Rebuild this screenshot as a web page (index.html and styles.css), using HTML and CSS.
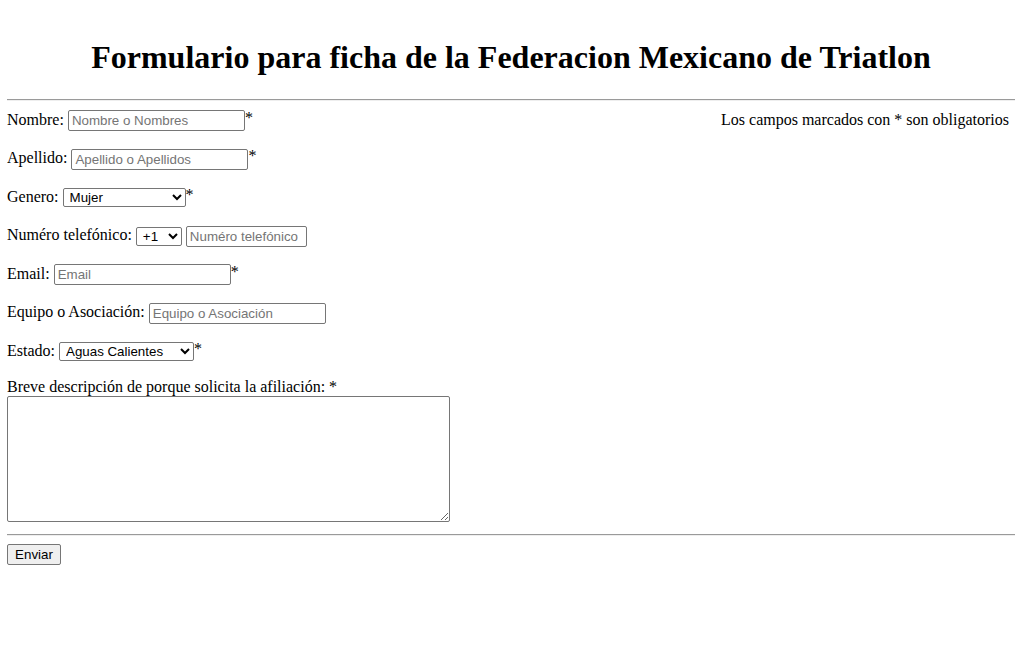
FILE: index.html
```html
<!DOCTYPE html>
<html lang="es">
<head>
<meta charset="utf-8">
<title>Ficha</title>
<link rel="stylesheet" href="styles.css">
</head>
<body>
<header class="head">
<h1 class="title">Formulario para ficha de la Federacion Mexicano de Triatlon</h1>
</header>
<hr class="rule">
<form class="form">
<p class="row row-first"><span class="note">Los campos marcados con * son obligatorios</span>Nombre: <input class="field" type="text" placeholder="Nombre o Nombres"><span class="req">*</span></p>
<p class="row">Apellido: <input class="field" type="text" placeholder="Apellido o Apellidos"><span class="req">*</span></p>
<p class="row">Genero: <select class="sel sel-gen"><option>Mujer</option><option>Hombre</option></select><span class="req">*</span></p>
<p class="row">Numéro telefónico: <select class="sel sel-code"><option>+1</option></select> <input class="field field-tel" type="text" placeholder="Numéro telefónico"></p>
<p class="row">Email: <input class="field" type="text" placeholder="Email"><span class="req">*</span></p>
<p class="row">Equipo o Asociación: <input class="field" type="text" placeholder="Equipo o Asociación"></p>
<p class="row">Estado: <select class="sel sel-est"><option>Aguas Calientes</option></select><span class="req">*</span></p>
<p class="row-desc">Breve descripción de porque solicita la afiliación: *<br><textarea class="desc"></textarea></p>
<hr class="rule rule-bottom">
<button class="btn" type="button">Enviar</button>
</form>
</body>
</html>
```
FILE: styles.css
```css
body {
  margin: 0 3px 0 7px;
  padding-top: 8px;
  font-family: "Liberation Serif", "Times New Roman", serif;
  font-size: 16px;
  color: #000;
  background: #fff;
}
.head {
  padding-top: 10px;
}
.title {
  text-align: center;
  font-size: 32px;
  font-weight: bold;
  margin: 21px 0 23px;
}
.rule {
  border: none;
  border-top: 1px solid #9a9a9a;
  border-bottom: 1px solid #eee;
  margin: 0;
}
.form {
  margin: 0;
}
.note {
  float: right;
  margin-right: 6px;
}
.row {
  margin: 0 0 16.5px;
  line-height: 22px;
  height: 22px;
}
.row-first {
  margin-top: 7.5px;
}
.field, .sel, .desc, .btn {
  font-family: "Liberation Sans", Arial, sans-serif;
  font-size: 13.333px;
}
.field {
  width: 177px;
  height: 21px;
  box-sizing: border-box;
  border: 1px solid #767676;
  border-radius: 2px;
  padding: 1px 3px;
  margin: 0;
  vertical-align: middle;
}
.field::placeholder {
  color: #757575;
}
.field-tel {
  width: 121px;
}
.sel {
  height: 19px;
  box-sizing: border-box;
  border: 1px solid #767676;
  border-radius: 2px;
  background: #fff;
  padding: 0 0 0 2px;
  margin: 0;
  vertical-align: middle;
}
.sel-gen { width: 123px; }
.sel-code { width: 46px; }
.sel-est { width: 135px; }
.req {
  vertical-align: top;
  line-height: 18px;
}
.row-desc {
  margin: 0 0 11.5px;
  line-height: 18px;
}
.desc {
  width: 443px;
  height: 126px;
  box-sizing: border-box;
  border: 1px solid #767676;
  border-radius: 2px;
  margin: 0;
  display: block;
  resize: both;
}
.rule-bottom {
  margin-bottom: 8px;
}
.btn {
  width: 54px;
  height: 21px;
  padding: 1px 6px;
  border: 1px solid #767676;
  border-radius: 2px;
  background: #efefef;
  color: #000;
  margin: 0;
}
```
